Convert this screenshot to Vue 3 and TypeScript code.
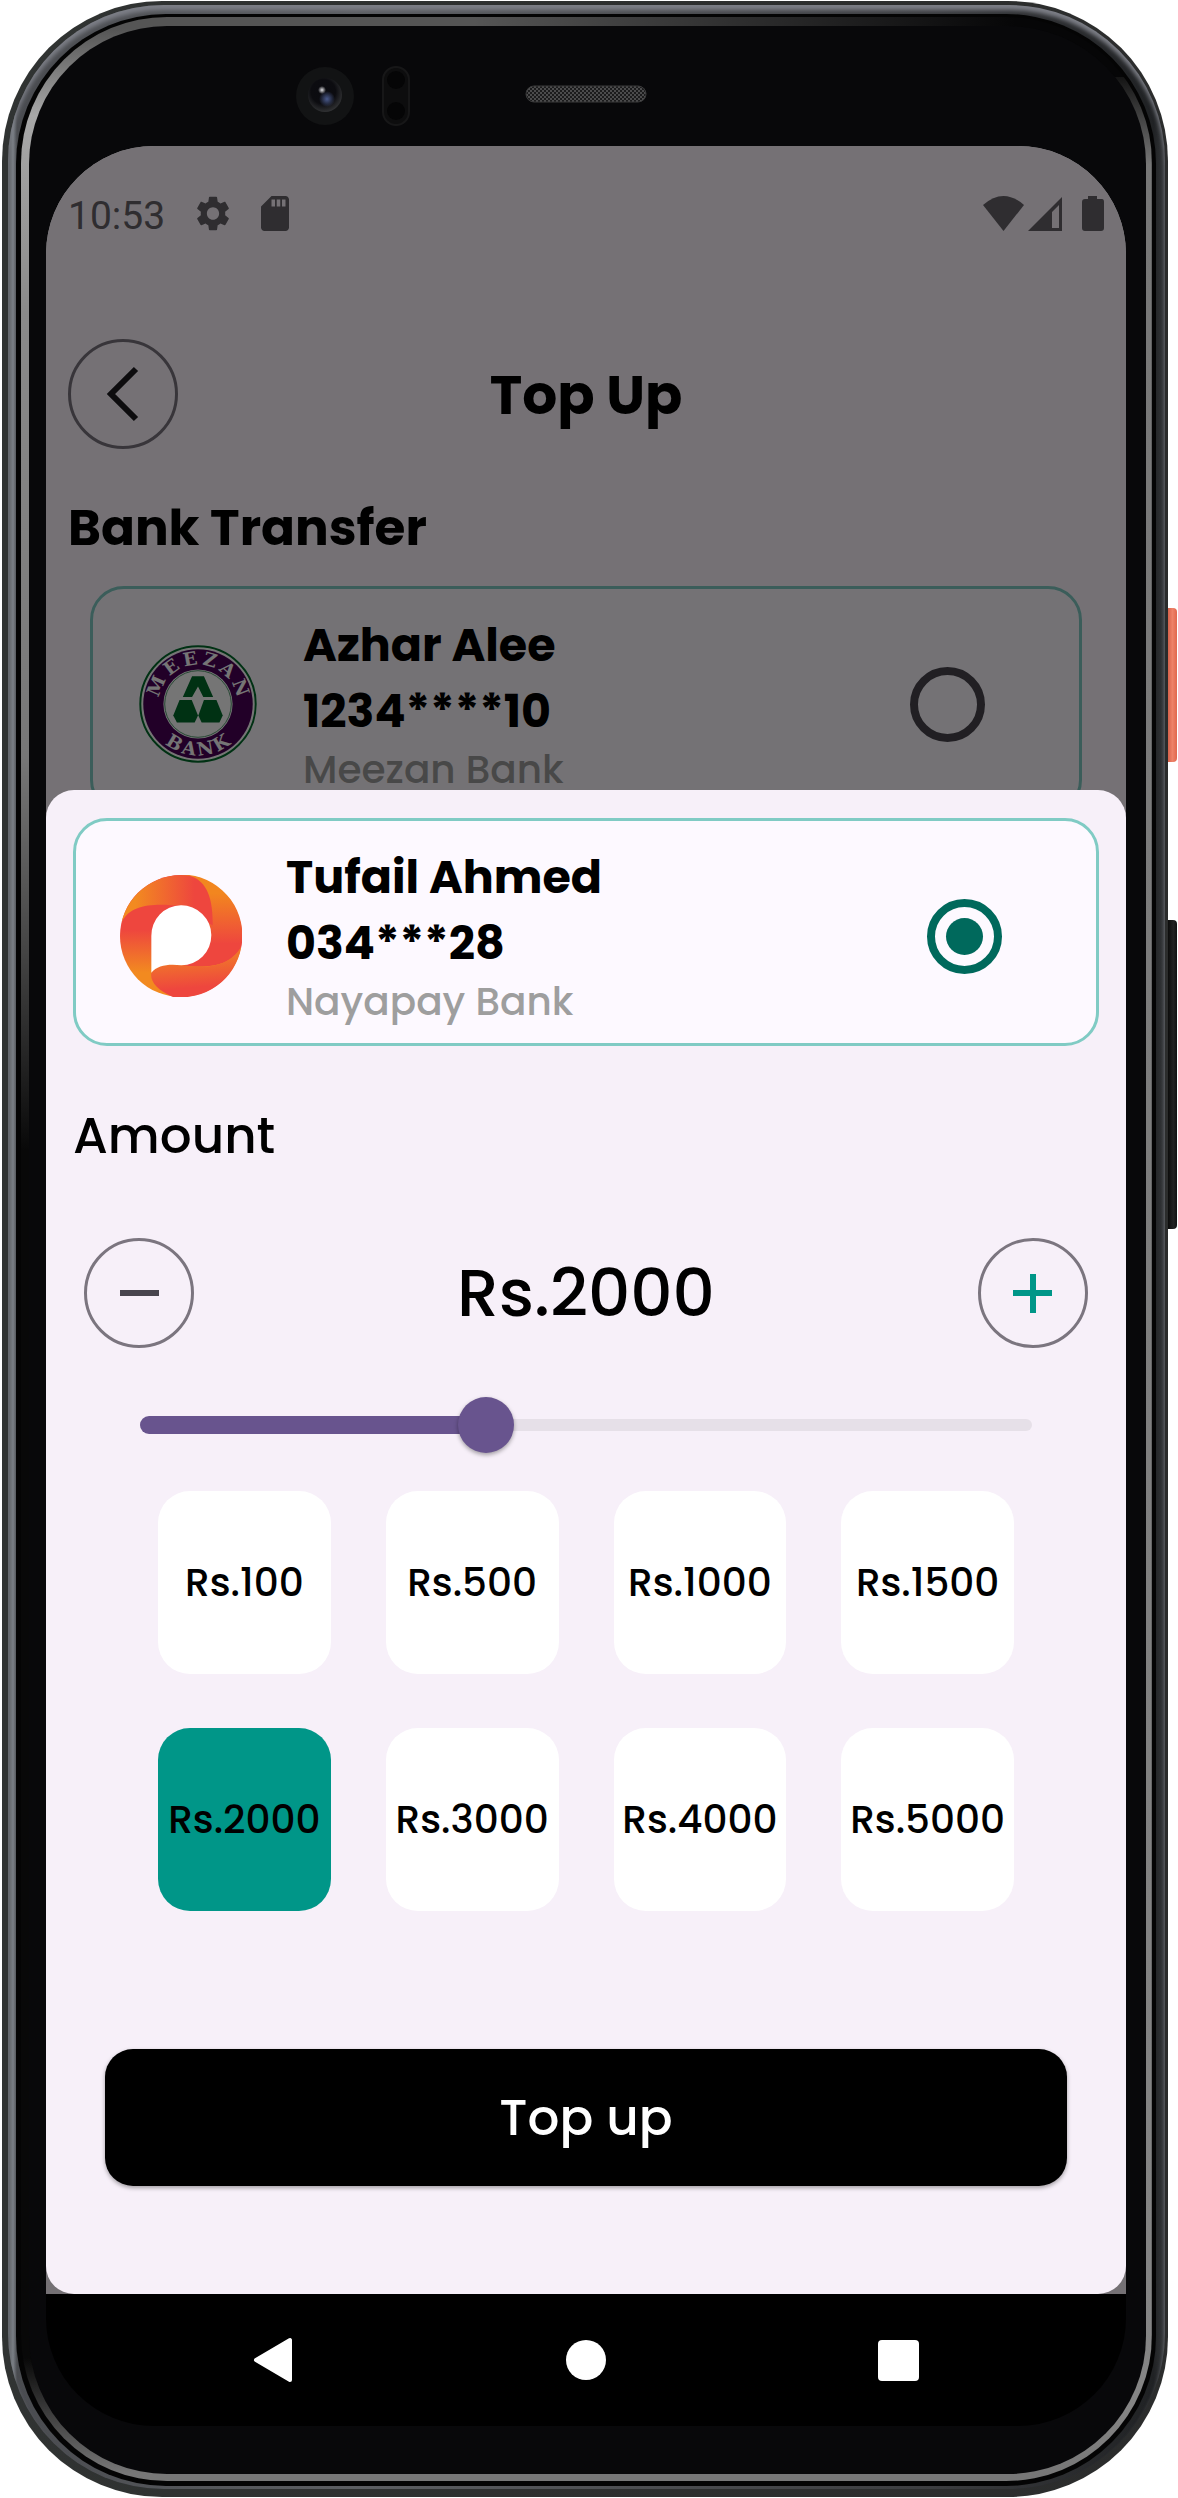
<script setup lang="ts">
import { computed, ref } from 'vue'

const MIN_AMOUNT = 100
const MAX_AMOUNT = 5000
const presets: number[] = [100, 500, 1000, 1500, 2000, 3000, 4000, 5000]

const account = ref<string>('nayapay')
const amount = ref<number>(2000)

const filled = computed(
  () => `${((amount.value - MIN_AMOUNT) / (MAX_AMOUNT - MIN_AMOUNT)) * 100}%`,
)

function step(delta: number): void {
  amount.value = Math.min(MAX_AMOUNT, Math.max(MIN_AMOUNT, amount.value + delta))
}
</script>

<template>
  <div class="stage">
    <div class="phone">
      <div class="side-key power"></div>
      <div class="side-key volume"></div>
      <div class="rail">
        <div class="seam">
          <div class="glint">
            <div class="glass">
              <svg class="sensors" viewBox="0 0 360 64" aria-hidden="true">
                <defs>
                  <radialGradient id="lens" cx="0.45" cy="0.4" r="0.6">
                    <stop offset="0" stop-color="#0b0b10" />
                    <stop offset="0.6" stop-color="#0c0c10" />
                    <stop offset="1" stop-color="#303133" />
                  </radialGradient>
                  <radialGradient id="flare">
                    <stop offset="0" stop-color="#4a5a8c" />
                    <stop offset="1" stop-color="#4a5a8c" stop-opacity="0" />
                  </radialGradient>
                  <radialGradient id="spark">
                    <stop offset="0" stop-color="#e0e0e4" />
                    <stop offset="1" stop-color="#e0e0e4" stop-opacity="0" />
                  </radialGradient>
                  <pattern id="mesh" width="4" height="4" patternUnits="userSpaceOnUse">
                    <rect width="4" height="4" fill="#1b1b1c" />
                    <rect width="2" height="2" fill="#4b4b4c" />
                    <rect x="2" y="2" width="2" height="2" fill="#4b4b4c" />
                  </pattern>
                </defs>
                <circle cx="33" cy="32" r="29" fill="#121314" />
                <circle cx="33" cy="31" r="17" fill="url(#lens)" />
                <circle cx="35" cy="35" r="8" fill="url(#flare)" />
                <circle cx="30" cy="26" r="4" fill="url(#spark)" />
                <rect x="91" y="3" width="26" height="58" rx="13" fill="#0d0d0e" stroke="#171718" stroke-width="2" />
                <circle cx="104" cy="16" r="9" fill="#050506" />
                <circle cx="104" cy="47" r="9" fill="#050506" />
                <rect x="234" y="22" width="120" height="16" rx="8" fill="url(#mesh)" stroke="#3a3a3b" />
              </svg>

              <div class="screen">
                <div class="app">
                  <div class="page">
                    <div class="status">
                      <span class="clock">10:53</span>
                      <svg class="gear" width="34" height="35" viewBox="2 2 20 20" preserveAspectRatio="none" aria-hidden="true">
                        <path d="M19.14 12.94c.04-.3.06-.61.06-.94 0-.32-.02-.64-.07-.94l2.03-1.58c.18-.14.23-.41.12-.61l-1.92-3.32c-.12-.22-.37-.29-.59-.22l-2.39.96c-.5-.38-1.03-.7-1.62-.94l-.36-2.54c-.04-.24-.24-.41-.48-.41h-3.84c-.24 0-.43.17-.47.41l-.36 2.54c-.59.24-1.13.57-1.62.94l-2.39-.96c-.22-.08-.47 0-.59.22L2.74 8.87c-.12.21-.08.47.12.61l2.03 1.58c-.05.3-.09.63-.09.94s.02.64.07.94l-2.03 1.58c-.18.14-.23.41-.12.61l1.92 3.32c.12.22.37.29.59.22l2.39-.96c.5.38 1.03.7 1.62.94l.36 2.54c.05.24.24.41.48.41h3.84c.24 0 .44-.17.47-.41l.36-2.54c.59-.24 1.13-.56 1.62-.94l2.39.96c.22.08.47 0 .59-.22l1.92-3.32c.12-.22.07-.47-.12-.61l-2.01-1.58zM12 15.6c-1.98 0-3.6-1.62-3.6-3.6s1.62-3.6 3.6-3.6 3.6 1.62 3.6 3.6-1.62 3.6-3.6 3.6z" fill="#666269" />
                      </svg>
                      <svg width="28" height="35" viewBox="4 2 16 20" aria-hidden="true">
                        <path d="M18 2h-8L4.02 8 4 20c0 1.100.9 2 2 2h12c1.100 0 2-.9 2-2V4c0-1.100-.9-2-2-2zm-6 6h-2V4h2v4zm3 0h-2V4h2v4zm3 0h-2V4h2v4z" fill="#666269" />
                      </svg>
                      <div class="signals">
                        <svg width="41" height="35" viewBox="0 0 41 35" aria-hidden="true">
                          <path d="M0 9Q20.500-9 41 9L20.500 35Z" fill="#666269" />
                        </svg>
                        <svg width="34" height="35" viewBox="0 0 34 35" aria-hidden="true">
                          <path d="M34 1V35H0ZM31 9L24 16V32H31Z" fill="#666269" fill-rule="evenodd" />
                        </svg>
                        <svg class="battery" width="22" height="35" viewBox="0 0 22 35" aria-hidden="true">
                          <path d="M6 0H15V3H20Q22 3 22 6V32Q22 35 19 35H3Q0 35 0 32V6Q0 3 3 3H6Z" fill="#666269" />
                        </svg>
                      </div>
                    </div>

                    <header class="header">
                      <button class="round" type="button" aria-label="Back">
                        <svg width="110" height="110" viewBox="0 0 110 110" aria-hidden="true">
                          <path d="M68 30L43 55L68 80" fill="none" stroke="#1d1b20" stroke-width="6" />
                        </svg>
                      </button>
                      <h1>Top Up</h1>
                    </header>

                    <h2>Bank Transfer</h2>

                    <label class="card inset">
                      <svg class="logo" viewBox="47 40 370 370" aria-hidden="true">
                        <defs>
                          <path id="arc-top" d="M113 235L113 225A119 119 0 0 1 351 225L351 235" />
                          <path id="arc-bottom" d="M76 225A156 156 0 0 0 388 225" />
                        </defs>
                        <circle cx="232" cy="225" r="175" fill="#fff" stroke="#006b2b" stroke-width="6" />
                        <circle cx="232" cy="225" r="166" fill="#4a0058" />
                        <circle cx="232" cy="225" r="105" fill="#fff" />
                        <circle cx="232" cy="225" r="101" fill="none" stroke="#006b2b" stroke-width="2" />
                        <g class="ring-text" fill="#fff" text-anchor="middle">
                          <text dx="0 11 11 11 11 11"><textPath href="#arc-top" startOffset="50%">MEEZAN</textPath></text>
                          <text dx="0 9 9 9"><textPath href="#arc-bottom" startOffset="50%">BANK</textPath></text>
                        </g>
                        <g fill="#006b2b">
                          <path d="M214 141H250L278 204H248L232 172L214 204H186Z" />
                          <path d="M176 213H213L232 260L222 281H168L157 260Z" />
                          <path d="M250 213H288L307 260L297 281H243L233 260Z" />
                        </g>
                      </svg>
                      <span class="details">
                        <strong>Azhar Alee</strong>
                        <strong>1234****10</strong>
                        <span class="bank">Meezan Bank</span>
                      </span>
                      <input v-model="account" type="radio" name="account" value="meezan" />
                    </label>
                  </div>

                  <div class="scrim"></div>

                  <section class="sheet">
                    <label class="card">
                      <svg class="logo" viewBox="0 0 362 362" aria-hidden="true">
                        <defs>
                          <linearGradient id="blade-top" x1="0" x2="1">
                            <stop offset="0.15" stop-color="#f28a20" />
                            <stop offset="0.8" stop-color="#ee463e" />
                          </linearGradient>
                          <linearGradient id="blade-right" x1="0" x2="0" y1="0" y2="1">
                            <stop offset="0.2" stop-color="#f2861f" />
                            <stop offset="0.75" stop-color="#ee463e" />
                          </linearGradient>
                          <linearGradient id="blade-bottom" x1="0.4" x2="0.55" y1="0" y2="1">
                            <stop offset="0.25" stop-color="#f0742b" />
                            <stop offset="0.8" stop-color="#ee463e" />
                          </linearGradient>
                          <linearGradient id="blade-left" x1="0" x2="0" y1="0" y2="1">
                            <stop offset="0.45" stop-color="#ee463e" />
                            <stop offset="0.8" stop-color="#f28a20" />
                          </linearGradient>
                        </defs>
                        <circle cx="181" cy="181" r="181" fill="url(#blade-left)" />
                        <path d="M181 181V0H205A181 181 0 0 1 360 213C330 270 260 278 182 268Z" fill="url(#blade-right)" />
                        <path d="M360 213A181 181 0 0 1 155 361C110 342 88 315 93 290C110 268 145 263 182 268C250 276 320 278 360 213Z" fill="url(#blade-bottom)" />
                        <path d="M5 140A181 181 0 0 1 207 2C250 15 277 55 275 150L182 92C105 83 30 85 5 140Z" fill="url(#blade-top)" />
                        <path d="M93 290V181A89 89 0 1 1 182 268C145 263 110 268 93 290Z" fill="#fff" />
                      </svg>
                      <span class="details">
                        <strong>Tufail Ahmed</strong>
                        <strong>034***28</strong>
                        <span class="bank">Nayapay Bank</span>
                      </span>
                      <input v-model="account" type="radio" name="account" value="nayapay" />
                    </label>

                    <label class="amount-label" for="amount">Amount</label>

                    <div class="stepper">
                      <button class="round" type="button" aria-label="Decrease" @click="step(-100)">
                        <svg width="110" height="110" viewBox="0 0 110 110" aria-hidden="true">
                          <path d="M36 55H75" stroke="#48454e" stroke-width="6" />
                        </svg>
                      </button>
                      <output for="amount">Rs.{{ amount }}</output>
                      <button class="round" type="button" aria-label="Increase" @click="step(100)">
                        <svg width="110" height="110" viewBox="0 0 110 110" aria-hidden="true">
                          <path d="M35 55H74M55 36V75" stroke="#009688" stroke-width="6" />
                        </svg>
                      </button>
                    </div>

                    <div class="slider">
                      <div class="track"></div>
                      <div class="fill-area"><div class="fill" :style="{ width: filled }"></div></div>
                      <input id="amount" v-model.number="amount" type="range" :min="MIN_AMOUNT" :max="MAX_AMOUNT" step="100" />
                    </div>

                    <div class="presets">
                      <button
                        v-for="value in presets"
                        :key="value"
                        type="button"
                        class="preset"
                        :class="{ selected: value === amount }"
                        @click="amount = value"
                      >
                        Rs.{{ value }}
                      </button>
                    </div>

                    <button class="submit" type="button">Top up</button>
                  </section>
                </div>

                <nav class="system-nav">
                  <button type="button" aria-label="Back">
                    <svg width="46" height="46" viewBox="0 0 46 46" aria-hidden="true">
                      <path d="M5 23L39 3V43Z" fill="#fff" stroke="#fff" stroke-width="4" stroke-linejoin="round" />
                    </svg>
                  </button>
                  <button type="button" aria-label="Home">
                    <svg width="46" height="46" viewBox="0 0 46 46" aria-hidden="true">
                      <circle cx="23" cy="23" r="20" fill="#fff" />
                    </svg>
                  </button>
                  <button type="button" aria-label="Recent apps">
                    <svg width="46" height="46" viewBox="0 0 46 46" aria-hidden="true">
                      <rect x="3" y="3" width="41" height="41" rx="4" fill="#fff" />
                    </svg>
                  </button>
                </nav>
              </div>
            </div>
          </div>
        </div>
      </div>
    </div>
  </div>
</template>

<style>
body {
  margin: 0;
  background: #fff;
}
</style>

<style scoped>
* {
  box-sizing: border-box;
}

.stage {
  padding: 1px 10px 1px 2px;
  font-family: Poppins, Inter, 'Open Sans', sans-serif;
  color: #000;
}

button {
  margin: 0;
  padding: 0;
  border: 0;
  background: none;
  font: inherit;
  color: inherit;
  cursor: pointer;
}

svg {
  display: block;
}

/* Device body */
.phone {
  position: relative;
  padding: 4px 3px 8px 6px;
  border-radius: 160px;
  background: linear-gradient(to right, #303332, #2b2c2c);
}

.side-key {
  position: absolute;
  left: 100%;
  width: 9px;
  border-radius: 0 4px 4px 0;
}

.power {
  top: 607px;
  height: 154px;
  background: linear-gradient(to right, #d9634c, #ee8268 50%, #e0674e);
}

.volume {
  top: 919px;
  height: 309px;
  background: linear-gradient(to right, #0c0c0c, #222 60%, #111);
}

.rail {
  padding: 9px 9px 3px 8px;
  border-radius: 156px;
  background: linear-gradient(to right, #55585c, #7b8086 5px, #4a4c50 9px, #5c5e62 30%, #3c3d40 80%, #202224 99%, #36383a);
  box-shadow: inset 0 5px 4px #7c7e86;
}

.seam {
  padding: 3px 4px 5px 5px;
  border-radius: 150px;
  background: #040404;
}

.glint {
  padding: 9px 6px 7px 8px;
  border-radius: 146px;
  background:
    linear-gradient(to right, transparent, #060607 80%) top right / 60% 60px no-repeat,
    linear-gradient(to bottom, #555 12px, #a8a8a8 4%, #8a8a8a 12%, #777 30%, #444 38%, #080808 46%, #080808 95%, #777 calc(100% - 8px)) left / 51% 100% no-repeat,
    linear-gradient(to bottom, #555 12px, #080808 2%, #777 6%, #858585 97%, #777 calc(100% - 8px)) right / 51% 100% no-repeat;
}

.glass {
  padding: 0 20px 48px 17px;
  border-radius: 138px;
  background: #08080a;
}

.glass::before {
  content: '';
  display: block;
  height: 38px;
}

.sensors {
  width: 360px;
  height: 64px;
  margin-left: 246px;
}

.screen {
  display: flex;
  flex-direction: column;
  margin-top: 18px;
  border-radius: 108px;
  overflow: hidden;
  background: #000;
}

/* Dimmed page, scrim and sheet share one grid cell */
.app {
  display: grid;
  grid-template-columns: minmax(0, 1fr);
}

.page,
.scrim,
.sheet {
  grid-area: 1 / 1;
}

.page {
  padding: 50px 22px 0;
  background: #fef7ff;
}

.scrim {
  z-index: 1;
  background: rgba(0, 0, 0, 0.54);
}

.status {
  display: flex;
  align-items: flex-start;
  gap: 31px;
}

.clock {
  font: 400 39px/40px Roboto, sans-serif;
  color: #666269;
}

.signals {
  display: flex;
  gap: 4px;
  margin-left: auto;
}

.battery {
  margin-left: 16px;
}

.header {
  display: grid;
  grid-template-columns: 110px 1fr 110px;
  align-items: center;
  margin-top: 103px;
}

.round {
  display: grid;
  place-items: center;
  width: 110px;
  height: 110px;
  border: 3px solid #7b757f;
  border-radius: 50%;
}

.round svg {
  margin: -3px;
}

h1,
h2 {
  margin: 0;
  font-weight: 700;
}

h1 {
  padding-top: 2px;
  font-size: 55px;
  line-height: 80px;
  text-align: center;
}

h2 {
  margin: 43px 0 22px;
  font-size: 50px;
  line-height: 72px;
}

.card {
  display: flex;
  align-items: center;
  padding: 23px 94px 15px 44px;
  border: 3px solid #80cbc4;
  border-radius: 34px;
  background: #fdf9ff;
}

.inset {
  margin: 0 22px;
}

.logo {
  flex: none;
  width: 122px;
  height: 122px;
}

.ring-text {
  font: 700 56px 'DejaVu Serif', serif;
}

.details {
  display: flex;
  flex: 1;
  flex-direction: column;
  margin-left: 44px;
}

.details strong {
  font-size: 46px;
  font-weight: 700;
  line-height: 66px;
}

.bank {
  font-size: 39px;
  font-weight: 500;
  line-height: 52px;
  color: #9e9e9e;
}

input[type='radio'] {
  appearance: none;
  display: grid;
  place-items: center;
  flex: none;
  width: 75px;
  height: 75px;
  margin: 0;
  border: 8px solid #48454e;
  border-radius: 50%;
}

input[type='radio']:checked {
  border-color: #00695c;
}

input[type='radio']:checked::before {
  content: '';
  width: 37px;
  height: 37px;
  border-radius: 50%;
  background: #00695c;
}

.sheet {
  z-index: 2;
  display: flex;
  flex-direction: column;
  margin-top: 644px;
  padding: 28px 27px 108px;
  border-radius: 28px;
  background: #f7f0f9;
}

.amount-label {
  margin-top: 54px;
  font-size: 50px;
  font-weight: 500;
  line-height: 72px;
}

.stepper {
  display: flex;
  align-items: center;
  justify-content: space-between;
  margin: 66px 11px 0;
}

.stepper output {
  font-size: 66px;
  font-weight: 500;
  line-height: 96px;
}

.slider {
  display: grid;
  align-items: center;
  margin: 49px 39px 0;
}

.track,
.fill-area,
.slider input {
  grid-area: 1 / 1;
}

.track {
  height: 12px;
  margin: 0 28px;
  border-radius: 6px;
  background: #e6e0e8;
}

.fill-area {
  margin: 0 28px;
}

.fill {
  height: 18px;
  border-radius: 9px;
  background: #68548e;
}

.slider input {
  appearance: none;
  z-index: 1;
  width: 100%;
  height: 56px;
  margin: 0;
  background: transparent;
}

.slider input::-webkit-slider-thumb {
  appearance: none;
  width: 56px;
  height: 56px;
  border-radius: 50%;
  background: #68548e;
  box-shadow: 0 2px 4px rgba(0, 0, 0, 0.35);
}

.presets {
  display: grid;
  grid-template-columns: repeat(4, 1fr);
  gap: 54px 55px;
  margin: 38px 85px 0;
}

.preset {
  height: 183px;
  border-radius: 32px;
  background: #fff;
  font-size: 39px;
  font-weight: 500;
}

.selected {
  background: #009688;
}

.submit {
  height: 137px;
  margin: 138px 32px 0;
  border-radius: 28px;
  background: #000;
  box-shadow: 0 2px 4px rgba(0, 0, 0, 0.35);
  font-size: 50px;
  font-weight: 500;
  color: #fff;
}

.system-nav {
  display: flex;
  justify-content: space-between;
  align-items: center;
  height: 132px;
  padding: 0 19%;
}
</style>
